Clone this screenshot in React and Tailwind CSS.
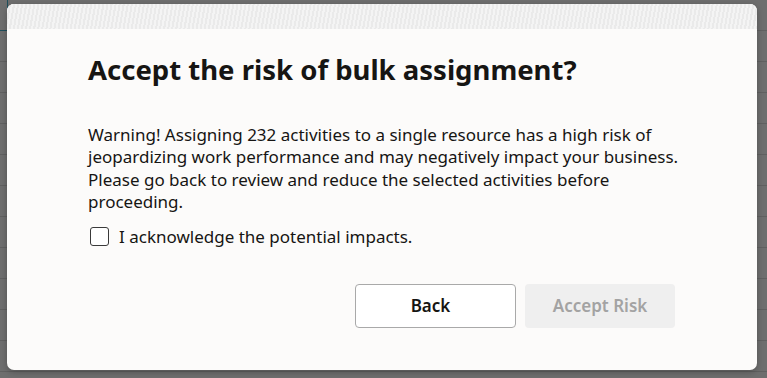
export default function App() {
  return (
    <div className="relative h-[378px] w-[767px] overflow-hidden bg-[#6e6e6e] bg-[repeating-linear-gradient(to_bottom,#6e6e6e_0px,#6e6e6e_30px,#606060_30px,#606060_31px)] font-['Noto_Sans',sans-serif]">
      <div className="absolute left-0 top-0 h-[31px] w-[8px] border-b border-r border-[#1f4f5c]" />
      <div className="absolute left-[7px] top-[4px] flex h-[366px] w-[750px] flex-col overflow-hidden rounded-[7px] bg-[#fcfbfa] shadow-[0_2px_6px_rgba(0,0,0,0.25)]">
        <div className="h-[25px] shrink-0 bg-[#efefef] bg-[repeating-linear-gradient(100deg,#f4f4f4_0px,#f4f4f4_2px,#eaeaea_2px,#eaeaea_4px)]" />
        <div className="flex flex-1 flex-col pl-[81px] pr-[82px] pt-[24px]">
          <h1 className="text-[27.5px] font-bold leading-[34px] text-[#161513]">Accept the risk of bulk assignment?</h1>
          <p className="mt-[37px] w-[595px] text-[17px] leading-[22.4px] text-[#161513]">
            Warning! Assigning 232 activities to a single resource has a high risk of jeopardizing work performance and may negatively impact your business. Please go back to review and reduce the selected activities before proceeding.
          </p>
          <label className="mt-[12px] flex items-center gap-[10px] text-[17px] leading-[22px] text-[#161513]">
            <span className="ml-[2px] h-[19px] w-[19px] rounded-[3px] border-[1.5px] border-[#3a3a3a] bg-white" />
            <span>I acknowledge the potential impacts.</span>
          </label>
          <div className="mt-[36px] flex justify-end gap-[9px]">
            <button className="h-[44px] w-[161px] rounded-[4px] border border-[#a9a9a9] bg-white pr-[10px] text-[17px] font-semibold text-[#161513]">Back</button>
            <button className="h-[44px] w-[150px] rounded-[4px] bg-[#efefef] text-[17px] font-semibold text-[#a3a3a3]">Accept Risk</button>
          </div>
        </div>
      </div>
    </div>
  );
}
